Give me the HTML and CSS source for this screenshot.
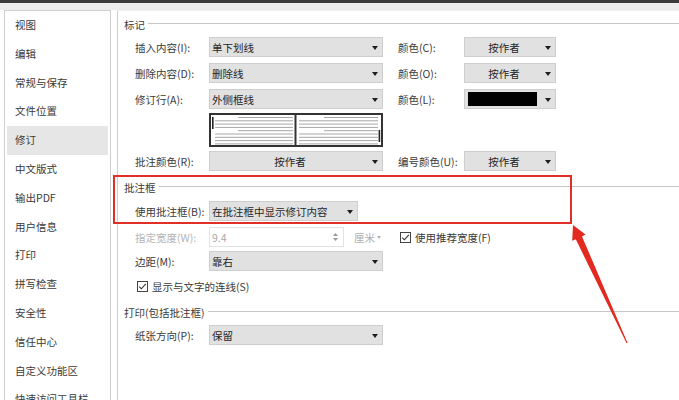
FILE: index.html
```html
<!DOCTYPE html>
<html lang="zh-CN">
<head>
<meta charset="utf-8">
<title>修订</title>
<link rel="stylesheet" href="styles.css">
</head>
<body>
<div class="topbar"></div>
<div class="layout">
  <nav class="sidebar">
    <div class="nav-item">视图</div>
    <div class="nav-item">编辑</div>
    <div class="nav-item">常规与保存</div>
    <div class="nav-item">文件位置</div>
    <div class="nav-item active">修订</div>
    <div class="nav-item">中文版式</div>
    <div class="nav-item">输出PDF</div>
    <div class="nav-item">用户信息</div>
    <div class="nav-item">打印</div>
    <div class="nav-item">拼写检查</div>
    <div class="nav-item">安全性</div>
    <div class="nav-item">信任中心</div>
    <div class="nav-item">自定义功能区</div>
    <div class="nav-item">快速访问工具栏</div>
  </nav>
  <main class="panel">
    <div class="group-title first"><span>标记</span><i class="rule"></i></div>

    <div class="row r-first">
      <span class="lbl">插入内容(I):</span>
      <div class="select wide"><span class="val">单下划线</span><i class="caret"></i></div>
      <span class="lbl2">颜色(C):</span>
      <div class="select narrow"><span class="val center">按作者</span><i class="caret"></i></div>
    </div>
    <div class="row r-gap6">
      <span class="lbl">删除内容(D):</span>
      <div class="select wide"><span class="val">删除线</span><i class="caret"></i></div>
      <span class="lbl2">颜色(O):</span>
      <div class="select narrow"><span class="val center">按作者</span><i class="caret"></i></div>
    </div>
    <div class="row r-gap6">
      <span class="lbl">修订行(A):</span>
      <div class="select wide"><span class="val">外侧框线</span><i class="caret"></i></div>
      <span class="lbl2">颜色(L):</span>
      <div class="select narrow swatch-select"><span class="swatch"></span><i class="caret"></i></div>
    </div>

    <div class="preview">
      <svg width="174" height="34" viewBox="0 0 174 34">
        <g stroke="#a6a6a6" stroke-width="1">
          <line x1="29" y1="4.5" x2="84" y2="4.5"/>
          <line x1="6" y1="7.8" x2="84" y2="7.8"/>
          <line x1="6" y1="11.1" x2="84" y2="11.1"/>
          <line x1="6" y1="14.4" x2="84" y2="14.4"/>
          <line x1="29" y1="17.7" x2="84" y2="17.7"/>
          <line x1="6" y1="21" x2="84" y2="21"/>
          <line x1="6" y1="24.3" x2="84" y2="24.3"/>
          <line x1="6" y1="27.6" x2="84" y2="27.6"/>
          <line x1="6" y1="30.9" x2="84" y2="30.9"/>
          <line x1="115" y1="4.5" x2="169" y2="4.5"/>
          <line x1="90" y1="7.8" x2="169" y2="7.8"/>
          <line x1="90" y1="11.1" x2="169" y2="11.1"/>
          <line x1="90" y1="14.4" x2="169" y2="14.4"/>
          <line x1="115" y1="17.7" x2="169" y2="17.7"/>
          <line x1="90" y1="21" x2="169" y2="21"/>
          <line x1="90" y1="24.3" x2="169" y2="24.3"/>
          <line x1="90" y1="27.6" x2="169" y2="27.6"/>
          <line x1="90" y1="30.9" x2="169" y2="30.9"/>
        </g>
        <rect x="3" y="4" width="1.6" height="12" fill="#222"/>
        <rect x="169.6" y="17" width="1.6" height="12" fill="#222"/>
        <rect x="1" y="1" width="172" height="32" fill="none" stroke="#333" stroke-width="2"/>
        <line x1="86.5" y1="1" x2="86.5" y2="33" stroke="#333" stroke-width="2"/>
      </svg>
    </div>

    <div class="row r-gap4">
      <span class="lbl">批注颜色(R):</span>
      <div class="select wide"><span class="val center">按作者</span><i class="caret"></i></div>
      <span class="lbl2">编号颜色(U):</span>
      <div class="select narrow"><span class="val center">按作者</span><i class="caret"></i></div>
    </div>

    <div class="group-title sec2"><span>批注框</span><i class="rule"></i></div>
    <div class="row r-gap4">
      <span class="lbl">使用批注框(B):</span>
      <div class="select mid"><span class="val">在批注框中显示修订内容</span><i class="caret"></i></div>
    </div>
    <div class="row r-gap6">
      <span class="lbl disabled">指定宽度(W):</span>
      <div class="spin">
        <span class="val">9.4</span>
        <svg class="spin-arrows" width="7" height="12" viewBox="0 0 7 12">
          <path d="M1 5 L3.5 2 L6 5 Z" fill="#9a9a9a"/>
          <path d="M1 7 L3.5 10 L6 7 Z" fill="#9a9a9a"/>
        </svg>
      </div>
      <span class="unit">厘米<i class="caret small"></i></span>
      <span class="check-wrap">
        <svg class="check" width="11" height="11" viewBox="0 0 11 11">
          <rect x="0.5" y="0.5" width="10" height="10" fill="#fff" stroke="#444"/>
          <path d="M2.3 5.6 L4.4 7.8 L8.8 2.9" fill="none" stroke="#333" stroke-width="1.1"/>
        </svg>
        <span>使用推荐宽度(F)</span>
      </span>
    </div>
    <div class="row r-gap4">
      <span class="lbl">边距(M):</span>
      <div class="select wide"><span class="val">靠右</span><i class="caret"></i></div>
    </div>
    <div class="row r-gap5">
      <span class="check-wrap first-col">
        <svg class="check" width="11" height="11" viewBox="0 0 11 11">
          <rect x="0.5" y="0.5" width="10" height="10" fill="#fff" stroke="#444"/>
          <path d="M2.3 5.6 L4.4 7.8 L8.8 2.9" fill="none" stroke="#333" stroke-width="1.1"/>
        </svg>
        <span>显示与文字的连线(S)</span>
      </span>
    </div>

    <div class="group-title sec3"><span>打印(包括批注框)</span><i class="rule"></i></div>
    <div class="row r-gap3">
      <span class="lbl">纸张方向(P):</span>
      <div class="select wide"><span class="val">保留</span><i class="caret"></i></div>
    </div>
  </main>
</div>

<div class="callout-box"></div>
<svg class="callout-arrow" width="679" height="400" viewBox="0 0 679 400">
  <polygon points="573,225 585.5,234.5 582,236.4 627.6,343 626.6,343.3 575.8,239.3 572.2,240.8" fill="#e32a20"/>
</svg>
</body>
</html>
```

FILE: styles.css
```css
html, body {
  margin: 0;
  padding: 0;
}

body {
  width: 679px;
  height: 400px;
  overflow: hidden;
  position: relative;
  background: #ffffff;
  font-family: "Noto Sans CJK SC", "Noto Sans", sans-serif;
  font-size: 10.5px;
  color: #3a3a3a;
}

.topbar {
  height: 3px;
  background: #3b3b3b;
  border-bottom: 7px solid #ececec;
}

.layout {
  display: flex;
  gap: 6px;
  height: 390px;
  padding-left: 4px;
}

.sidebar {
  width: 107px;
  flex: none;
  box-sizing: border-box;
  border: 1px solid #cfcfcf;
  border-bottom: none;
  padding: 0 2px;
  overflow: hidden;
}

.nav-item {
  height: 28.8px;
  line-height: 27px;
  padding-left: 8px;
  white-space: nowrap;
  color: #3a3a3a;
}

.nav-item.active {
  background: #e6e6e6;
}

.panel {
  flex: 1;
  border-left: 1px solid #cfcfcf;
  border-top: 1px solid #f0f0f0;
  box-sizing: border-box;
}

.group-title {
  display: flex;
  align-items: center;
  height: 20px;
  padding-left: 6px;
  color: #3a3a3a;
}

.group-title .rule {
  flex: 1;
  height: 0;
  border-top: 1px solid #c6c6c6;
  margin-left: 3px;
  margin-top: -1px;
}

.group-title.first { margin-top: 3px; }
.group-title.sec2 { margin-top: 6px; }
.group-title.sec3 { margin-top: 6px; }

.row {
  display: flex;
  align-items: center;
  height: 20px;
}

.r-first { margin-top: 3px; }
.r-gap3 { margin-top: 3px; }
.r-gap4 { margin-top: 4px; }
.r-gap5 { margin-top: 5px; }
.r-gap6 { margin-top: 6px; }

.lbl {
  width: 74px;
  margin-left: 17px;
  flex: none;
  white-space: nowrap;
  color: #3a3a3a;
}

.lbl.disabled {
  color: #b4b4b4;
}

.lbl2 {
  width: 66px;
  margin-left: 15px;
  flex: none;
  white-space: nowrap;
  color: #3a3a3a;
}

.select {
  box-sizing: border-box;
  height: 20px;
  display: flex;
  align-items: center;
  background: #e1e1e1;
  border: 1px solid #cecece;
  padding-left: 2px;
  flex: none;
}

.select.wide { width: 174px; }
.select.mid { width: 149px; }
.select.narrow { width: 92px; }

.select .val {
  flex: 1;
  white-space: nowrap;
  color: #262626;
}

.select .val.center {
  text-align: center;
}

.caret {
  display: block;
  width: 0;
  height: 0;
  border-left: 3.5px solid transparent;
  border-right: 3.5px solid transparent;
  border-top: 4px solid #1e1e1e;
  margin: 1px 4px 0 4px;
  flex: none;
}

.caret.small {
  display: inline-block;
  border-left-width: 2.5px;
  border-right-width: 2.5px;
  border-top: 3px solid #b0b0b0;
  margin: 0 0 2px 2px;
  vertical-align: middle;
}

.swatch-select .swatch {
  flex: 1;
  height: 14px;
  background: #000000;
  margin-left: 1px;
  margin-right: 4px;
}

.preview {
  margin-top: 4px;
  margin-left: 91px;
  height: 34px;
}

.preview svg {
  display: block;
}

.spin {
  box-sizing: border-box;
  width: 135px;
  height: 20px;
  flex: none;
  display: flex;
  align-items: center;
  border: 1px solid #e3e3e3;
  padding-left: 2px;
  padding-right: 4px;
  color: #a8a8a8;
}

.spin .val {
  flex: 1;
}

.spin-arrows {
  display: block;
}

.unit {
  margin-left: 10px;
  color: #b0b0b0;
  white-space: nowrap;
}

.check-wrap {
  display: flex;
  align-items: center;
  white-space: nowrap;
  margin-left: 19px;
  color: #3a3a3a;
}

.check-wrap.first-col {
  margin-left: 19px;
}

.check {
  display: block;
  margin-right: 4px;
}

.callout-box {
  position: absolute;
  left: 113px;
  top: 175px;
  width: 459px;
  height: 49px;
  box-sizing: border-box;
  border: 2px solid #df2f27;
}

.callout-arrow {
  position: absolute;
  left: 0;
  top: 0;
  pointer-events: none;
}
```
